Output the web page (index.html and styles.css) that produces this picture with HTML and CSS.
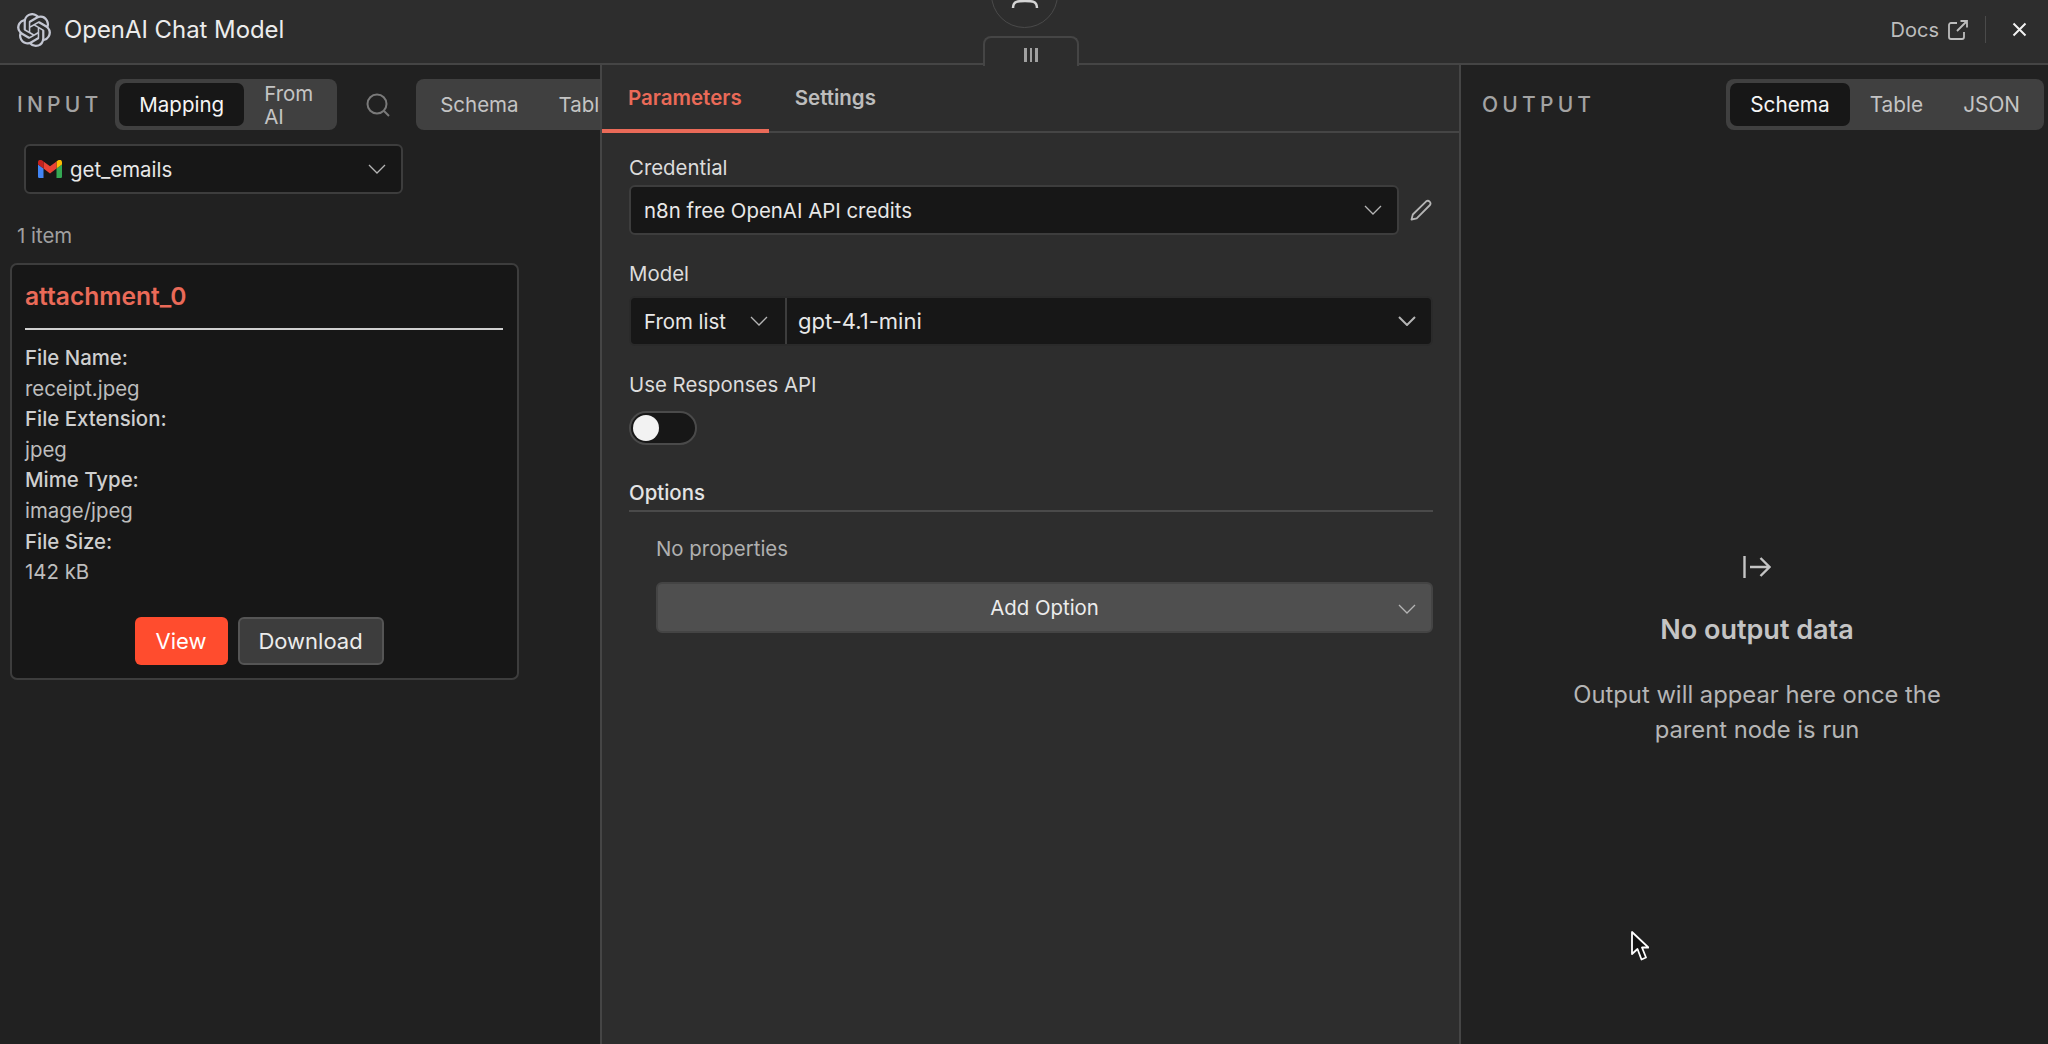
FILE: index.html
```html
<!DOCTYPE html>
<html lang="en">
<head>
    <meta charset="UTF-8">
    <title>OpenAI Chat Model</title>
    <link rel="stylesheet" href="styles.css">
</head>
<body>
    <svg class="defs" width="0" height="0">
        <symbol id="chevron" viewBox="0 0 18 10"><path d="M1 1l8 8 8-8" fill="none" stroke="currentColor" stroke-width="1.3"/></symbol>
        <symbol id="chevron-bold" viewBox="0 0 18 10"><path d="M1 1l8 8 8-8" fill="none" stroke="currentColor" stroke-width="2"/></symbol>
    </svg>

    <!-- Top bar -->
    <header class="topbar">
        <svg class="logo" viewBox="0 0 24 24"><path d="M22.2819 9.8211a5.9847 5.9847 0 0 0-.5157-4.9108 6.0462 6.0462 0 0 0-6.5098-2.9A6.0651 6.0651 0 0 0 4.9807 4.1818a5.9847 5.9847 0 0 0-3.9977 2.9 6.0462 6.0462 0 0 0 .7427 7.0966 5.98 5.98 0 0 0 .511 4.9107 6.051 6.051 0 0 0 6.5146 2.9001A5.9847 5.9847 0 0 0 13.2599 24a6.0557 6.0557 0 0 0 5.7718-4.2058 5.9894 5.9894 0 0 0 3.9977-2.9001 6.0557 6.0557 0 0 0-.7475-7.0729zm-9.022 12.6081a4.4755 4.4755 0 0 1-2.8764-1.0408l.1419-.0804 4.7783-2.7582a.7948.7948 0 0 0 .3927-.6813v-6.7369l2.02 1.1686a.071.071 0 0 1 .038.052v5.5826a4.504 4.504 0 0 1-4.4945 4.4944zm-9.6607-4.1254a4.4708 4.4708 0 0 1-.5346-3.0137l.142.0852 4.783 2.7582a.7712.7712 0 0 0 .7806 0l5.8428-3.3685v2.3324a.0804.0804 0 0 1-.0332.0615L9.74 19.9502a4.4992 4.4992 0 0 1-6.1408-1.6464zM2.3408 7.8956a4.485 4.485 0 0 1 2.3655-1.9728V11.6a.7664.7664 0 0 0 .3879.6765l5.8144 3.3543-2.0201 1.1685a.0757.0757 0 0 1-.071 0l-4.8303-2.7865A4.504 4.504 0 0 1 2.3408 7.872zm16.5963 3.8558L13.1038 8.364 15.1192 7.2a.0757.0757 0 0 1 .071 0l4.8303 2.7913a4.4944 4.4944 0 0 1-.6765 8.1042v-5.6772a.79.79 0 0 0-.407-.667zm2.0107-3.0231l-.142-.0852-4.7735-2.7818a.7759.7759 0 0 0-.7854 0L9.409 9.2297V6.8974a.0662.0662 0 0 1 .0284-.0615l4.8303-2.7866a4.4992 4.4992 0 0 1 6.6802 4.66zM8.3065 12.863l-2.02-1.1638a.0804.0804 0 0 1-.038-.0567V6.0742a4.4992 4.4992 0 0 1 7.3757-3.4537l-.142.0805L8.704 5.459a.7948.7948 0 0 0-.3927.6813zm1.0976-2.3654l2.602-1.4998 2.6069 1.4998v2.9994l-2.5974 1.4997-2.6067-1.4997Z"/></svg>
        <span class="node-title">OpenAI Chat Model</span>
        <span class="docs">Docs</span>
        <svg class="docs-icon" viewBox="0 0 20 20" fill="none" stroke="currentColor" stroke-width="1.8"><path d="M9 3H3a2 2 0 0 0-2 2v12a2 2 0 0 0 2 2h11a2 2 0 0 0 2-2v-5"/><path d="M9 11L19 1M12.5 1H19v6.5"/></svg>
        <span class="bar-sep"></span>
        <svg class="close-icon" viewBox="0 0 15 15" fill="none" stroke="currentColor" stroke-width="2"><path d="M1.5 1.5l12 12M13.5 1.5l-12 12"/></svg>
    </header>

    <!-- Floating bits over the top bar -->
    <div class="node-circle"><svg viewBox="0 0 28 10" fill="none" stroke="currentColor" stroke-width="2.5"><path d="M2 9C2 2 7 2 14 2S26 2 26 9"/></svg></div>
    <div class="drag-handle"><span></span><span></span><span></span></div>

    <main class="panels">
        <!-- Input -->
        <section class="panel panel-input">
            <div class="panel-head">
                <span class="panel-label">INPUT</span>
                <div class="switcher switcher-mode">
                    <span class="switch-item active">Mapping</span>
                    <span class="switch-item wrap">From AI</span>
                </div>
                <svg class="search-icon" viewBox="0 0 24 24" fill="none" stroke="currentColor" stroke-width="2"><circle cx="11" cy="11" r="9.5"/><path d="M18 18l5 5"/></svg>
                <div class="switcher switcher-view">
                    <span class="switch-item">Schema</span>
                    <span class="switch-item">Table</span>
                </div>
            </div>
            <div class="select node-select">
                <svg class="gmail" viewBox="0 0 24 18">
                    <path d="M1.6 18H5.5V8.5L0 4.4V16.4C0 17.3.7 18 1.6 18Z" fill="#4285f4"/>
                    <path d="M18.5 18H22.4C23.3 18 24 17.3 24 16.4V4.4L18.5 8.5Z" fill="#34a853"/>
                    <path d="M18.5 1.4V8.5L24 4.4V2.2C24 .2 21.7-.9 20.1.3Z" fill="#fbbc04"/>
                    <path d="M5.5 8.5V1.4L12 6.3 18.5 1.4V8.5L12 13.4Z" fill="#ea4335"/>
                    <path d="M0 2.2V4.4L5.5 8.5V1.4L3.9.3C2.3-.9 0 .2 0 2.2Z" fill="#c5221f"/>
                </svg>
                <span class="select-text">get_emails</span>
                <svg class="chevron"><use href="#chevron"/></svg>
            </div>
            <div class="item-count">1 item</div>
            <div class="binary-card">
                <div class="binary-title">attachment_0</div>
                <dl class="binary-meta">
                    <dt>File Name:</dt><dd>receipt.jpeg</dd>
                    <dt>File Extension:</dt><dd>jpeg</dd>
                    <dt>Mime Type:</dt><dd>image/jpeg</dd>
                    <dt>File Size:</dt><dd>142 kB</dd>
                </dl>
                <div class="binary-actions">
                    <button class="btn btn-primary">View</button>
                    <button class="btn btn-secondary">Download</button>
                </div>
            </div>
        </section>

        <!-- Parameters -->
        <section class="panel panel-main">
            <nav class="tabs">
                <span class="tab active">Parameters</span>
                <span class="tab">Settings</span>
            </nav>
            <div class="params">
                <label class="field-label">Credential</label>
                <div class="credential-row">
                    <div class="select credential-select">
                        <span class="select-text">n8n free OpenAI API credits</span>
                        <svg class="chevron"><use href="#chevron"/></svg>
                    </div>
                    <svg class="pencil" viewBox="0 0 22 22" fill="none" stroke="currentColor" stroke-width="1.8" stroke-linejoin="round"><path d="M16.2 2.3a2.7 2.7 0 0 1 3.8 3.7L6.7 19.3 1.5 20.5 2.8 15.5z"/></svg>
                </div>
                <label class="field-label model-label">Model</label>
                <div class="model-row">
                    <div class="model-mode">
                        <span class="select-text">From list</span>
                        <svg class="chevron"><use href="#chevron"/></svg>
                    </div>
                    <div class="model-value">
                        <span class="select-text">gpt-4.1-mini</span>
                        <svg class="chevron"><use href="#chevron-bold"/></svg>
                    </div>
                </div>
                <label class="field-label responses-label">Use Responses API</label>
                <div class="toggle"><span class="knob"></span></div>
                <div class="options-head">Options</div>
                <div class="options-body">
                    <div class="no-props">No properties</div>
                    <div class="add-option">
                        <span>Add Option</span>
                        <svg class="chevron"><use href="#chevron"/></svg>
                    </div>
                </div>
            </div>
        </section>

        <!-- Output -->
        <section class="panel panel-output">
            <div class="panel-head output-head">
                <span class="panel-label">OUTPUT</span>
                <div class="switcher switcher-output">
                    <span class="switch-item active">Schema</span>
                    <span class="switch-item">Table</span>
                    <span class="switch-item">JSON</span>
                </div>
            </div>
            <div class="empty">
                <svg class="empty-icon" viewBox="0 0 28 22" fill="none" stroke="currentColor" stroke-width="2.4"><path d="M1.5 0v22M7 11h19M17.5 2l9 9-9 9"/></svg>
                <div class="empty-title">No output data</div>
                <p class="empty-text">Output will appear here once the parent node is run</p>
            </div>
        </section>
    </main>

    <svg class="cursor" viewBox="0 0 18 30"><path d="M1 1v22l5.5-5 4 10.5 4.5-2-4-10H17.5z" fill="#111" stroke="#fff" stroke-width="1.8" stroke-linejoin="round"/></svg>
</body>
</html>
```

FILE: styles.css
```css
* {
    margin: 0;
    padding: 0;
    box-sizing: border-box;
}

html, body {
    height: 100%;
}

body {
    background: #212121;
    color: #d4d4d4;
    font-family: Inter, "Liberation Sans", sans-serif;
    font-size: 20.4px;
    overflow: hidden;
    position: relative;
    display: flex;
    flex-direction: column;
}

.defs {
    position: absolute;
}

/* top bar */
.topbar {
    flex: 0 0 65px;
    display: flex;
    align-items: center;
    background: #2d2d2d;
    border-bottom: 2px solid #454545;
    padding: 0 21px 4px 17px;
}

.logo {
    width: 34px;
    height: 34px;
    fill: #c3c6d2;
}

.node-title {
    margin-left: 13px;
    font-size: 23.9px;
    color: #ececec;
}

.docs {
    margin-left: auto;
    font-size: 20px;
    color: #bdbdbd;
}

.docs-icon {
    width: 20px;
    height: 20px;
    margin-left: 9px;
    color: #bdbdbd;
}

.bar-sep {
    width: 1px;
    height: 27px;
    background: #4a4a4a;
    margin: 0 26px 0 17px;
}

.close-icon {
    width: 15px;
    height: 15px;
    color: #f2f2f2;
}

.node-circle {
    position: absolute;
    left: 991px;
    top: -39px;
    width: 67px;
    height: 67px;
    border: 1px solid #4a4a4a;
    border-radius: 50%;
    color: #d4d4d4;
}

.node-circle svg {
    position: absolute;
    left: 19px;
    top: 37px;
    width: 28px;
    height: 10px;
}

.drag-handle {
    position: absolute;
    left: 983px;
    top: 36px;
    width: 96px;
    height: 30px;
    padding-top: 5px;
    background: #2d2d2d;
    border: 2px solid #454545;
    border-bottom: none;
    border-radius: 8px 8px 0 0;
    display: flex;
    justify-content: center;
    align-items: center;
    gap: 3px;
    z-index: 2;
}

.drag-handle span {
    width: 2.5px;
    height: 14px;
    background: #a0a0a0;
}

/* panels */
.panels {
    flex: 1;
    display: grid;
    grid-template-columns: 600px 861px 1fr;
    min-height: 0;
}

.panel {
    min-width: 0;
    overflow: hidden;
}

.panel-main {
    background: #2d2d2d;
    border-left: 2px solid #454545;
    border-right: 2px solid #454545;
}

.panel-head {
    display: flex;
    align-items: center;
    height: 51px;
    margin-top: 14px;
}

.panel-input .panel-head {
    padding-left: 17px;
}

.output-head {
    justify-content: space-between;
    padding: 0 4px 0 21px;
}

.panel-label {
    flex-shrink: 0;
    font-size: 21px;
    font-weight: 500;
    letter-spacing: 4.2px;
    color: #a3a3a3;
}

.switcher {
    display: flex;
    align-items: center;
    flex-shrink: 0;
    height: 51px;
    padding: 4px;
    background: #404040;
    border-radius: 8px;
    font-size: 20.5px;
    color: #c4c4c4;
}

.switcher-output {
    font-size: 20.8px;
}

.switch-item {
    display: flex;
    align-items: center;
    height: 43px;
    padding: 0 20px;
    border-radius: 7px;
}

.switch-item.active {
    background: #171717;
    color: #f5f5f5;
}

.switch-item.wrap {
    width: 89px;
    line-height: 23px;
}

.switcher-mode {
    margin-left: 13px;
}

.switcher-view {
    margin-left: 26px;
}

.search-icon {
    flex-shrink: 0;
    width: 24px;
    height: 24px;
    margin-left: 29px;
    color: #7a7a7a;
}

/* selects */
.select {
    display: flex;
    align-items: center;
    background: #171717;
    border: 2px solid #3d3d3d;
    border-radius: 6px;
    height: 50px;
    color: #e8e8e8;
}

.chevron {
    width: 18px;
    height: 10px;
    margin-left: auto;
    color: #b5b5b5;
}

.node-select {
    width: 379px;
    margin: 14px 0 0 24px;
    padding: 0 15px 0 12px;
}

.gmail {
    width: 24px;
    height: 18px;
    margin-right: 8px;
}

.item-count {
    margin: 32px 0 17px 17px;
    line-height: 20px;
    color: #a0a0a0;
}

/* binary card */
.binary-card {
    width: 509px;
    height: 417px;
    margin-left: 10px;
    padding: 16px 14px 0 13px;
    background: #171717;
    border: 2px solid #3d3d3d;
    border-radius: 7px;
}

.binary-title {
    font-size: 24.6px;
    font-weight: 600;
    line-height: 30px;
    color: #ea6a58;
    padding-bottom: 17px;
    border-bottom: 2px solid #d0d0d0;
}

.binary-meta {
    margin-top: 13px;
    line-height: 30.6px;
}

.binary-meta dt {
    font-weight: 500;
    color: #cfcfcf;
}

.binary-meta dd {
    color: #bdbdbd;
}

.binary-actions {
    display: flex;
    justify-content: center;
    gap: 10px;
    margin-top: 29px;
    padding-right: 10px;
}

.btn {
    height: 48px;
    font-family: inherit;
    font-size: 22px;
    border-radius: 6px;
}

.btn-primary {
    width: 93px;
    background: #ff4c2e;
    border: none;
    color: #fff;
}

.btn-secondary {
    width: 146px;
    background: #3d3d3d;
    border: 2px solid #555;
    color: #ececec;
}

/* tabs */
.tabs {
    display: flex;
    height: 68px;
    border-bottom: 2px solid #454545;
}

.tab {
    padding: 0 27px 0 26px;
    height: 68px;
    line-height: 65px;
    font-size: 20.5px;
    font-weight: 600;
    color: #bdbdbd;
}

.tab.active {
    color: #ea6a58;
    border-bottom: 4px solid #ea6a58;
}

/* parameters */
.params {
    padding: 23px 26px 0 27px;
}

.field-label {
    display: block;
    line-height: 24px;
    color: #dcdcdc;
}

.credential-row {
    display: flex;
    align-items: center;
    margin-top: 5px;
}

.credential-select {
    width: 770px;
    padding: 0 15px 0 13px;
}

.pencil {
    width: 22px;
    height: 22px;
    margin-left: 11px;
    color: #b5b5b5;
}

.model-label {
    margin-top: 27px;
}

.model-row {
    display: flex;
    height: 50px;
    margin-top: 10px;
    background: #171717;
    border: 2px solid #2a2a2a;
    border-radius: 6px;
    color: #e8e8e8;
}

.model-mode {
    display: flex;
    align-items: center;
    width: 156px;
    padding: 0 17px 0 13px;
    border-right: 2px solid #3d3d3d;
}

.model-value {
    flex: 1;
    display: flex;
    align-items: center;
    padding: 0 15px 0 11px;
    font-size: 22px;
}

.responses-label {
    margin-top: 27px;
}

.toggle {
    width: 68px;
    height: 34px;
    margin-top: 14px;
    padding: 2px;
    background: #171717;
    border: 2px solid #4a4a4a;
    border-radius: 17px;
}

.knob {
    display: block;
    width: 26px;
    height: 26px;
    background: #f2f2f2;
    border-radius: 50%;
}

.options-head {
    margin-top: 36px;
    padding-bottom: 5px;
    font-weight: 500;
    line-height: 24px;
    color: #e4e4e4;
    border-bottom: 2px solid #4a4a4a;
}

.options-body {
    padding-left: 27px;
}

.no-props {
    margin-top: 25px;
    line-height: 24px;
    color: #b0b0b0;
}

.add-option {
    position: relative;
    display: flex;
    align-items: center;
    justify-content: center;
    height: 51px;
    margin-top: 21px;
    background: #4f4f4f;
    border: 2px solid #444;
    border-radius: 6px;
    color: #ececec;
}

.add-option .chevron {
    position: absolute;
    right: 15px;
    top: 20px;
}

/* output */
.empty {
    display: flex;
    flex-direction: column;
    align-items: center;
    margin-top: 426px;
    padding-left: 5px;
    text-align: center;
}

.empty-icon {
    width: 28px;
    height: 22px;
    color: #c4c4c4;
}

.empty-title {
    margin-top: 35px;
    font-size: 27px;
    font-weight: 600;
    line-height: 34px;
    color: #c4c4c4;
}

.empty-text {
    width: 400px;
    margin-top: 30px;
    font-size: 23.8px;
    line-height: 35px;
    color: #b5b5b5;
}

.cursor {
    position: absolute;
    left: 1631px;
    top: 931px;
    width: 18px;
    height: 30px;
}
```
